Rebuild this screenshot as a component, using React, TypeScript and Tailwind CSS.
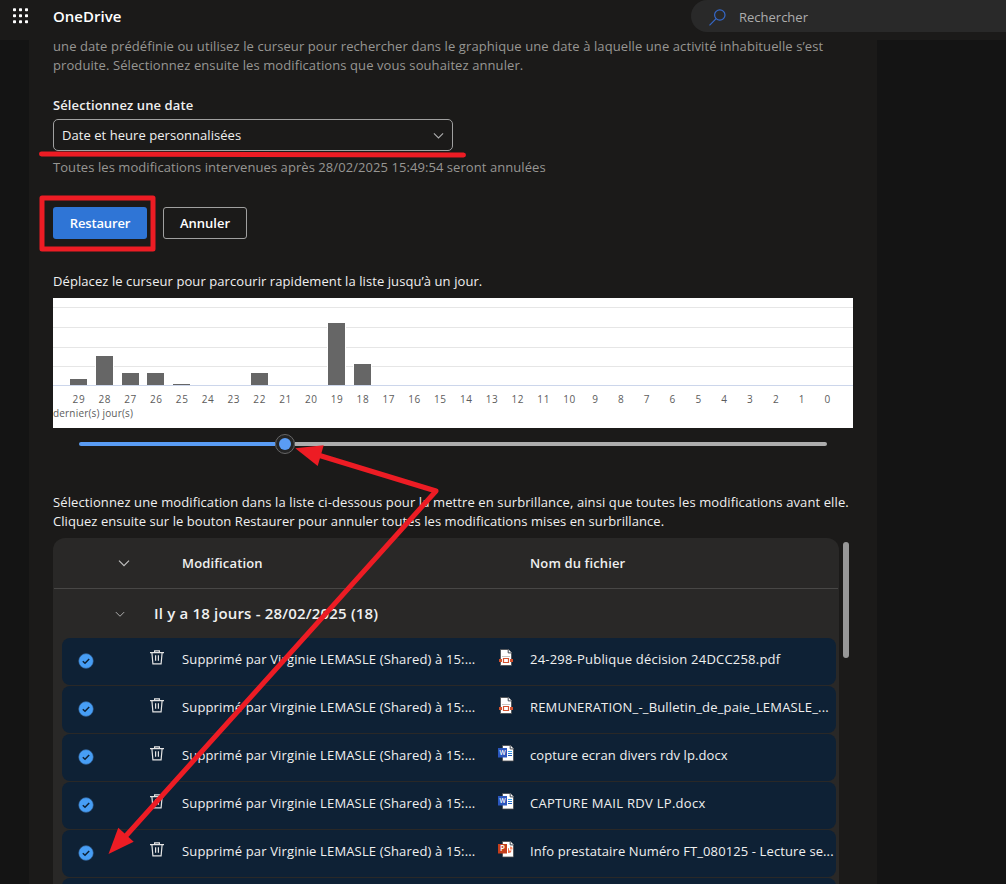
import { clsx } from "clsx";

type FileKind = "pdf" | "word" | "powerpoint";

interface Change {
  file: string;
  kind: FileKind;
  spacing: string;
}

const CHANGES: Change[] = [
  { file: "24-298-Publique décision 24DCC258.pdf", kind: "pdf", spacing: "tracking-[0.21px]" },
  { file: "REMUNERATION_-_Bulletin_de_paie_LEMASLE_...", kind: "pdf", spacing: "tracking-[0.18px]" },
  { file: "copture ecran divers rdv lp.docx", kind: "word", spacing: "tracking-[0.1px]" },
  { file: "CAPTURE MAIL RDV LP.docx", kind: "word", spacing: "tracking-[0.29px]" },
  { file: "Info prestataire Numéro FT_080125 - Lecture se...", kind: "powerpoint", spacing: "tracking-[0.11px]" },
];

// x and top are relative to the chart box
const BARS = [
  { x: 17, top: 81 },
  { x: 43, top: 58 },
  { x: 69, top: 75 },
  { x: 94, top: 75 },
  { x: 120, top: 86 },
  { x: 198, top: 75 },
  { x: 275, top: 25 },
  { x: 301, top: 66 },
];

const DAYS = Array.from({ length: 30 }, (_, i) => 29 - i);

const Chevron = ({ className }: { className?: string }) => (
  <svg viewBox="0 0 12 12" fill="none" stroke="currentColor" strokeWidth="1.2" className={className}>
    <path d="M1 3.7 6 8.7l5-5" />
  </svg>
);

const Waffle = () => (
  <svg width="17" height="16" viewBox="0 0 17 16" fill="#fff">
    {[0, 6, 12].map((y) =>
      [1, 7, 13].map((x) => <rect key={`${x}-${y}`} x={x} y={y + 0.2} width="3" height="3" rx="0.8" />)
    )}
  </svg>
);

const CheckIcon = () => (
  <svg width="16" height="16" viewBox="0 0 16 16">
    <circle cx="8" cy="8" r="7.4" fill="#479ef5" stroke="#2a4a70" strokeWidth="0.6" />
    <path d="m4.800 8.200 2.200 2.100 4.200-4.300" fill="none" stroke="#0e2135" strokeWidth="1.5" />
  </svg>
);

const TrashIcon = () => (
  <svg width="14" height="15" viewBox="0 0 14 15" fill="none" stroke="#e4e4e4" strokeWidth="1.2">
    <path d="M0 2.600h14M4.600 2.400V.8h4.800v1.600M1.900 2.800l1 11.100h8.200l1-11.100" />
    <path d="M5.600 5.200v5.600M8.400 5.200v5.600" />
  </svg>
);

const FileIcon = ({ kind }: { kind: FileKind }) => {
  if (kind === "pdf") {
    return (
      <svg width="16" height="17" viewBox="0 0 16 17">
        <path d="M2.500.5h8l3 3v13h-11z" fill="#fff" stroke="#494a4c" strokeWidth="0.8" />
        <path d="M10.200.3v3.600h3.600" fill="#fff" stroke="#3d4650" />
        <path d="M4 7.500h8" stroke="#c8c6c4" />
        <path d="M1 10h3v3H1zM12 10h3v3h-3z" fill="#d35230" />
        <path d="M5.500 9.500h5v4h-5z" fill="#fff" stroke="#d35230" strokeWidth="1.2" />
      </svg>
    );
  }
  const isWord = kind === "word";
  return (
    <svg width="16" height="17" viewBox="0 0 16 17">
      <path d="M4.500.5h8l3 3v12.500h-11z" fill="#fff" stroke="#494a4c" strokeWidth="0.8" />
      <path d="M12.200.3v3.600h3.600" fill="#fff" stroke="#3d4650" />
      {isWord ? (
        <>
          <path d="M10 6.500h4" stroke="#41a5ee" />
          <path d="M10 8.500h4" stroke="#2b7cd3" />
          <path d="M10 10.500h4" stroke="#185abd" />
        </>
      ) : (
        <>
          <path d="M10 7.500v4.400a3 3 0 0 0 3.600-2.400H11V7z" fill="#ed6c47" />
          <path d="M12 5.500v3h2.500a2.600 2.600 0 0 0-2.500-3" fill="#ff8f6b" />
        </>
      )}
      <path d="M0 3h9v9.500H0z" fill={isWord ? "#2b56bd" : "#c43e1c"} />
      <text x="4.5" y="10.4" textAnchor="middle" fill="#fff" fontSize={isWord ? 6.5 : 8} fontWeight="600">
        {isWord ? "W" : "P"}
      </text>
    </svg>
  );
};

const Header = () => (
  <header className="flex h-10 shrink-0 bg-[#1b1a19]">
    <div className="pl-3 pt-2">
      <Waffle />
    </div>
    <div className="ml-6 flex-1 pt-[6px] text-[15px] font-semibold leading-5 text-white">OneDrive</div>
    <div className="flex h-8 w-[315px] items-center rounded-l-full bg-[#292929] pl-[18px] pt-[2px]">
      <svg width="17" height="17" viewBox="0 0 17 17" fill="none" stroke="#3568c8" strokeWidth="1.2">
        <circle cx="10.8" cy="6" r="5.2" />
        <path d="M7.100 9.700.5 16.300" />
      </svg>
      <span className="ml-[13px] pt-px text-[13px] text-[#adadad]">Rechercher</span>
    </div>
  </header>
);

const ActivityChart = () => (
  <svg width="800" height="130" className="mt-[7px] block bg-white" shapeRendering="crispEdges">
    {[9, 29, 49, 68].map((y) => (
      <rect key={y} y={y} width="800" height="1" fill="#e6e6e6" />
    ))}
    {BARS.map(({ x, top }) => (
      <rect key={x} x={x - 1} y={top - 1} width="19" height={88 - top} fill="#fff" />
    ))}
    {BARS.map(({ x, top }) => (
      <rect key={x} x={x} y={top} width="17" height={87 - top} fill="#666" />
    ))}
    <rect y="87" width="800" height="1" fill="#ccd6eb" />
    <g fill="#5c5c5c" fontSize="10">
      {DAYS.map((day, i) => (
        <text key={day} x={25.9 + i * 25.82} y="105" textAnchor="middle" letterSpacing="0.6">
          {day}
        </text>
      ))}
      <text x="0" y="119" letterSpacing="0.18">
        dernier(s) jour(s)
      </text>
    </g>
  </svg>
);

const DaySlider = () => (
  <div className="mt-[6px] flex h-5 items-center pl-[26px]">
    <div className="h-1 w-[196px] rounded-l-sm bg-[#5a9cf4]" />
    <div className="flex size-5 items-center justify-center rounded-full border border-[#666] bg-[#242424]">
      <div className="size-3 rounded-full bg-[#5a9cf4]" />
    </div>
    <div className="h-1 w-[532px] rounded-r-sm bg-[#adadad]" />
  </div>
);

const ChangeRow = ({ file, kind, spacing }: Change) => (
  <div className="mb-px ml-[9px] flex h-[47px] w-[774px] shrink-0 rounded-lg bg-[#0e2135] text-[13px] leading-5 text-[#f0f0f0]">
    <div className="w-[88px] pl-4 pt-[15px]">
      <CheckIcon />
    </div>
    <div className="w-8 pt-3">
      <TrashIcon />
    </div>
    <div className="w-[316px] whitespace-nowrap pt-[11px] tracking-[0.15px]">
      Supprimé par Virginie LEMASLE (Shared) à 15:...
    </div>
    <div className="w-8 pt-[11px]">
      <FileIcon kind={kind} />
    </div>
    <div className={clsx("whitespace-nowrap pt-[11px]", spacing)}>{file}</div>
  </div>
);

const ChangeTable = () => (
  <div className="mt-[7px] flex min-h-0 flex-1">
    <div className="flex w-[786px] flex-col overflow-hidden rounded-t-xl bg-[#292827] text-[#f0f0f0]">
      <div className="mx-px flex h-[51px] shrink-0 items-center border-b border-[#484746] text-[13px] font-semibold">
        <Chevron className="ml-16 size-3 text-[#c0c0c0]" />
        <span className="ml-[52px] w-[348px] pt-[2px] tracking-[0.15px]">Modification</span>
        <span className="pt-[2px] tracking-[0.14px]">Nom du fichier</span>
      </div>
      <div className="flex h-[49px] shrink-0 items-center text-[15px] font-semibold">
        <Chevron className="ml-[62px] size-[10px] text-[#adadad]" />
        <span className="ml-[29px] tracking-[0.18px]">Il y a 18 jours - 28/02/2025 (18)</span>
      </div>
      {CHANGES.map((change) => (
        <ChangeRow key={change.file} {...change} />
      ))}
      <div className="ml-[9px] h-[47px] w-[774px] shrink-0 rounded-lg bg-[#0e2135]" />
    </div>
    <div className="ml-1 mt-1 h-[116px] w-[6px] rounded-full bg-[#979797]" />
  </div>
);

const Annotations = () => (
  <svg
    className="pointer-events-none absolute inset-0"
    width="1006"
    height="884"
    fill="none"
    stroke="#ed1c24"
    strokeWidth="5"
    strokeLinecap="round"
    strokeLinejoin="round"
  >
    <path d="M41.500 154 463.500 155" />
    <rect x="42" y="198" width="111" height="51" />
    <path d="M318 455 436 491 124 838" />
    <g fill="#ed1c24" stroke="none">
      <path d="m295.300 448.300 28.400-3-6 20.700z" />
      <path d="m108.500 854 9.800-26.300 15.400 14z" />
    </g>
  </svg>
);

export default function App() {
  return (
    <div className="relative flex h-[884px] w-[1006px] flex-col overflow-hidden bg-[#141414] font-['Open_Sans','Noto_Sans',sans-serif] text-[13px]">
      <Header />
      <main className="ml-[29px] flex min-h-0 w-[848px] flex-1 flex-col bg-[#1b1a19] pl-6 text-[#f0f0f0]">
        <div className="-mt-[3px] whitespace-nowrap leading-[19px] tracking-[0.095px] text-[#979693]">
          <p>une date prédéfinie ou utilisez le curseur pour rechercher dans le graphique une date à laquelle une activité inhabituelle s’est</p>
          <p>produite. Sélectionnez ensuite les modifications que vous souhaitez annuler.</p>
        </div>
        <label className="mt-5 font-semibold leading-5 tracking-[0.1px]">Sélectionnez une date</label>
        <div className="mt-1 flex h-8 w-[400px] shrink-0 items-center justify-between rounded-[5px] border border-[#a0a0a0] pl-2 pr-2">
          <span className="pt-[2px] tracking-[0.05px]">Date et heure personnalisées</span>
          <Chevron className="size-[11px] text-[#adadad]" />
        </div>
        <p className="mt-[6px] leading-5 tracking-[0.065px] text-[#979693]">
          Toutes les modifications intervenues après 28/02/2025 15:49:54 seront annulées
        </p>
        <div className="mt-[30px] flex h-8 shrink-0 gap-4 font-semibold text-white">
          <button className="w-[94px] rounded-[3px] bg-[#2f75d6] pt-[2px] tracking-[-0.15px]">Restaurer</button>
          <button className="w-[84px] rounded-[3px] border border-[#a0a0a0] pt-[2px]">Annuler</button>
        </div>
        <p className="mt-8 leading-5 tracking-[0.08px]">Déplacez le curseur pour parcourir rapidement la liste jusqu’à un jour.</p>
        <ActivityChart />
        <DaySlider />
        <div className="mt-[39px] whitespace-nowrap leading-[19px]">
          <p className="tracking-[0.107px]">
            Sélectionnez une modification dans la liste ci-dessous pour la mettre en surbrillance, ainsi que toutes les modifications avant elle.
          </p>
          <p className="tracking-[0.065px]">
            Cliquez ensuite sur le bouton Restaurer pour annuler toutes les modifications mises en surbrillance.
          </p>
        </div>
        <ChangeTable />
      </main>
      <Annotations />
    </div>
  );
}
